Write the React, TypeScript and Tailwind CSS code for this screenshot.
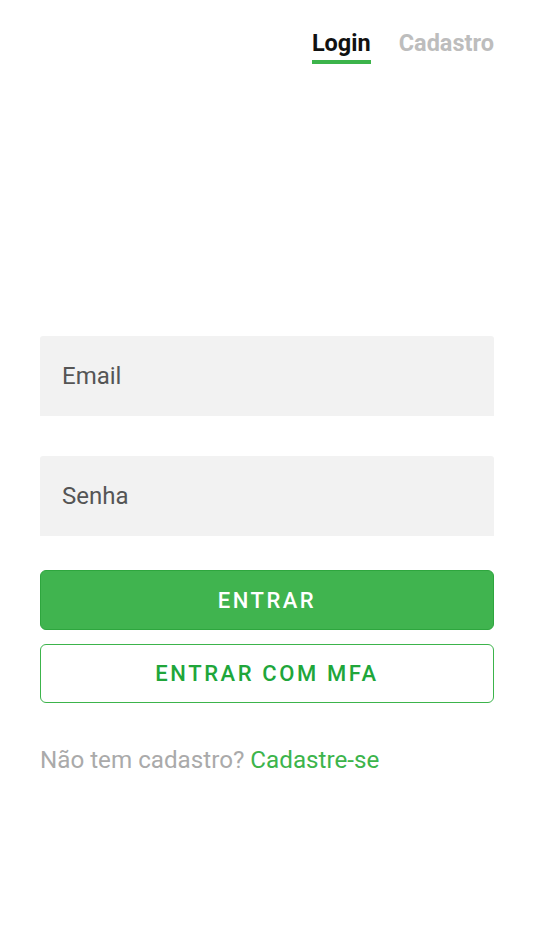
import React from "react";

export default function App() {
  return (
    <div
      className="w-[534px] h-[950px] bg-white flex flex-col px-[40px]"
      style={{ fontFamily: "Roboto, 'Liberation Sans', sans-serif" }}
    >
      <div className="flex justify-end gap-[28px] pt-[28px]">
        <div className="flex flex-col items-stretch">
          <span className="text-[23.5px] leading-[30px] font-bold text-[#111111]">Login</span>
          <div className="mt-[2px] h-[4px] bg-[#3cb44b]" />
        </div>
        <div className="flex flex-col items-center">
          <span className="text-[23.5px] leading-[30px] font-bold text-[#bdbdbd]">Cadastro</span>
        </div>
      </div>

      <div className="mt-[272px] flex flex-col">
        <div className="h-[80px] bg-[#f2f2f2] rounded-t-[3px] flex items-center px-[22px]">
          <span className="text-[24px] text-[#555555]">Email</span>
        </div>
        <div className="mt-[40px] h-[80px] bg-[#f2f2f2] rounded-t-[3px] flex items-center px-[22px]">
          <span className="text-[24px] text-[#555555]">Senha</span>
        </div>
        <button className="mt-[34px] h-[60px] rounded-[6px] bg-[#40b44f] border border-[#2ea63e] text-white text-[22px] font-medium tracking-[2.5px] flex items-center justify-center">
          ENTRAR
        </button>
        <button className="mt-[14px] h-[59px] rounded-[6px] bg-white border border-[#3cb44b] text-[#20a63a] text-[22px] font-medium tracking-[2.6px] flex items-center justify-center">
          ENTRAR COM MFA
        </button>
        <div className="mt-[42px] text-[24.2px] leading-[30px]">
          <span className="text-[#aaaaaa]">Não tem cadastro? </span>
          <span className="text-[#3cb44b]">Cadastre-se</span>
        </div>
      </div>
    </div>
  );
}
